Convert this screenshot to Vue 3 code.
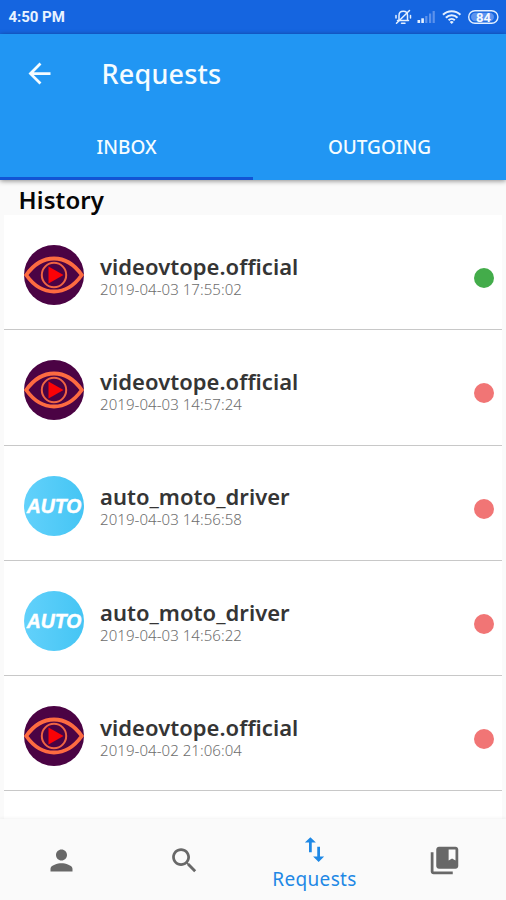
<script setup>
const rows = [
  { name: 'videovtope.official', time: '2019-04-03 17:55:02', kind: 'eye', ok: true },
  { name: 'videovtope.official', time: '2019-04-03 14:57:24', kind: 'eye', ok: false },
  { name: 'auto_moto_driver', time: '2019-04-03 14:56:58', kind: 'auto', ok: false },
  { name: 'auto_moto_driver', time: '2019-04-03 14:56:22', kind: 'auto', ok: false },
  { name: 'videovtope.official', time: '2019-04-02 21:06:04', kind: 'eye', ok: false },
]
</script>

<template>
  <div class="screen">
    <div class="status">
      <span class="clock">4:50 PM</span>
      <svg class="status-icons" width="108" height="20" viewBox="-2 0 108 20" fill="none">
        <g stroke="#e4f0ff" stroke-width="1.5" stroke-linecap="round" stroke-linejoin="round">
          <path d="M1.500 13.500h11M3 13V8.500C3 6 4.800 4.300 7.300 4.300S11.500 6 11.500 8.500V13" />
          <path d="M5.500 16.300h3.500M0.500 16.300L13.500 3.500M0 8.500v2.500M14.500 8.500v2.500" />
        </g>
        <g>
          <rect x="21.500" y="13" width="2.600" height="3" fill="#e4f0ff" />
          <rect x="25.300" y="11.300" width="2.600" height="4.700" fill="#e4f0ff" />
          <rect x="29.200" y="9" width="2.200" height="7" fill="#5c92ec" />
          <rect x="33" y="6.500" width="2.200" height="9.500" fill="#5c92ec" />
          <rect x="36.600" y="4" width="2.200" height="12" fill="#5c92ec" />
        </g>
        <g stroke="#e4f0ff" stroke-width="2.100">
          <path d="M47 7.800a12.300 12.300 0 0 1 17.400 0" />
          <path d="M49.900 10.700a8.200 8.200 0 0 1 11.600 0" />
          <path d="M52.600 13.300a4.400 4.400 0 0 1 6.200 0" />
        </g>
        <path d="M53.700 14.900L55.700 17l2-2.100a3 3 0 0 0-4 0z" fill="#e4f0ff" />
        <rect x="72.700" y="3.700" width="29.200" height="12.600" rx="6.300" stroke="#e4f0ff" stroke-width="1.400" />
        <rect x="75" y="5.800" width="23" height="8.400" rx="4.200" fill="#5c93ef" />
        <text class="battery" x="87.500" y="14.500" text-anchor="middle">84</text>
      </svg>
    </div>

    <header class="appbar">
      <div class="title-row">
        <svg class="icon back" viewBox="0 0 24 24"><path d="M20 11H7.830l5.590-5.590L12 4l-8 8 8 8 1.410-1.410L7.830 13H20v-2z" /></svg>
        <h1>Requests</h1>
      </div>
      <nav class="tabs">
        <div class="tab active">INBOX</div>
        <div class="tab">OUTGOING</div>
      </nav>
    </header>

    <main>
      <h2>History</h2>
      <ul class="list">
        <li v-for="(r, i) in rows" :key="i" class="row">
          <svg v-if="r.kind === 'eye'" class="avatar" viewBox="0 0 60 60">
            <circle cx="30" cy="30" r="30" fill="#4b0344" />
            <path d="M2.200 30C10 19 19 13.500 30 13.500S50 19 57.800 30C50 41 41 46.500 30 46.500S10 41 2.200 30z" fill="none" stroke="#fd6b41" stroke-width="3.800" />
            <circle cx="30" cy="30" r="12.200" fill="none" stroke="#f06543" stroke-width="2" />
            <path d="M24.500 21.500L39.500 30l-15 8.500z" fill="#fb0207" />
          </svg>
          <svg v-else class="avatar" viewBox="0 0 60 60">
            <defs>
              <linearGradient :id="'sky' + i" x1="0" y1="0" x2="1" y2="0">
                <stop offset="0" stop-color="#62d1fb" />
                <stop offset="1" stop-color="#45c5f4" />
              </linearGradient>
            </defs>
            <circle cx="30" cy="30" r="30" :fill="`url(#sky${i})`" />
            <text class="auto-logo" x="2.800" y="36.800" textLength="54.500" lengthAdjust="spacingAndGlyphs">AUTO</text>
          </svg>
          <div class="info">
            <div class="name">{{ r.name }}</div>
            <div class="time">{{ r.time }}</div>
          </div>
          <span class="dot" :class="{ ok: r.ok }"></span>
        </li>
      </ul>
    </main>

    <footer class="bottom">
      <div class="item person"><svg class="icon" viewBox="0 0 24 24"><path d="M12 12c2.210 0 4-1.790 4-4s-1.790-4-4-4-4 1.790-4 4 1.790 4 4 4zm0 2c-2.670 0-8 1.340-8 4v2h16v-2c0-2.660-5.330-4-8-4z" /></svg></div>
      <div class="item search"><svg class="icon" viewBox="0 0 24 24"><path d="M15.500 14h-.790l-.280-.270C15.410 12.590 16 11.110 16 9.500 16 5.910 13.090 3 9.500 3S3 5.910 3 9.500 5.910 16 9.500 16c1.610 0 3.090-.590 4.230-1.570l.270.280v.790l5 4.990L20.490 19l-4.990-5zm-6 0C7.010 14 5 11.990 5 9.500S7.010 5 9.500 5 14 7.010 14 9.500 11.990 14 9.500 14z" /></svg></div>
      <div class="item current">
        <svg class="icon" viewBox="0 0 24 24"><path d="M16 17.010V10h-2v7.010h-3L15 21l4-3.990h-3zM9 3L5 6.990h3V14h2V6.990h3L9 3z" /></svg>
        <span class="label">Requests</span>
      </div>
      <div class="item saved"><svg class="icon" viewBox="0 0 24 24"><path d="M4 6H2v14c0 1.100.900 2 2 2h14v-2H4V6z" /><path d="M20 2H8c-1.100 0-2 .900-2 2v12c0 1.100.900 2 2 2h12c1.100 0 2-.900 2-2V4c0-1.100-.900-2-2-2zm0 10l-2.500-1.500L15 12V4h5v8z" /></svg></div>
    </footer>
  </div>
</template>

<style>
body { background: #fafafa; }
</style>

<style scoped>
.screen { width: 506px; height: 900px; display: flex; flex-direction: column; overflow: hidden; background: #fafafa; font-family: "Noto Sans", "Open Sans", sans-serif; }
.status { height: 34px; flex: none; box-sizing: border-box; padding: 0 4px 0 8.500px; display: flex; align-items: center; justify-content: space-between; background: #1565e0; }
.clock { font: 700 15px/34px Roboto, sans-serif; color: #e8f3ff; letter-spacing: -0.050px; }
.status-icons { margin-bottom: 1px; }
.battery { font: 700 13px Roboto, sans-serif; fill: #f4f9ff; }
.icon { width: 33px; height: 33px; fill: currentColor; display: block; flex: none; }
.appbar { height: 146px; flex: none; display: flex; flex-direction: column; background: #2196f3; color: #f5fcff; box-shadow: 0 1px 5px rgba(0, 0, 0, 0.45); position: relative; z-index: 1; }
.title-row { height: 79px; display: flex; align-items: center; padding-left: 23px; }
h1 { margin: 0 0 0 45.500px; font-size: 27px; line-height: 40px; font-weight: 500; letter-spacing: 0.2px; }
.tabs { flex: 1; display: flex; }
.tab { flex: 1; box-sizing: border-box; padding-top: 4px; border-bottom: 3px solid transparent; display: flex; align-items: center; justify-content: center; font-size: 19px; font-weight: 500; }
.tab.active { border-color: #1254d4; }
main { flex: 1; min-height: 0; display: flex; flex-direction: column; }
h2 { margin: 0; height: 35px; flex: none; padding: 3px 0 0 18.500px; box-sizing: border-box; font-size: 24px; line-height: 34px; font-weight: 600; letter-spacing: 0.1px; color: #060606; }
.list { margin: 0 4px; padding: 0; list-style: none; flex: 1; background: #fff; }
.row { height: 115.300px; box-sizing: border-box; border-bottom: 1.500px solid #c8c8c8; padding: 0 8px 0 20px; display: flex; align-items: center; }
.avatar { width: 60px; height: 60px; flex: none; margin-top: 6px; }
.auto-logo { font: italic 700 20px "Liberation Sans", sans-serif; fill: #fff; stroke: #fff; stroke-width: 0.5px; }
.info { flex: 1; margin-left: 16px; padding-top: 8px; white-space: nowrap; }
.name { font-size: 22px; line-height: 25px; font-weight: 600; letter-spacing: 0.030px; color: #353535; }
.time { font-size: 15px; line-height: 20px; font-weight: 300; letter-spacing: 0.060px; color: #6d6d6d; }
.dot { width: 20px; height: 20px; border-radius: 50%; background: #f17575; margin-top: 12px; }
.dot.ok { background: #43ac4a; }
.bottom { height: 81px; flex: none; display: flex; background: #fafafa; color: #686868; box-shadow: 0 -1px 3px rgba(0, 0, 0, 0.05); }
.item { display: flex; flex-direction: column; align-items: center; padding-top: 25px; box-sizing: border-box; }
.person { width: 123px; }
.search { width: 123px; }
.current { width: 137px; padding-top: 14px; color: #1e88e5; }
.saved { width: 122px; }
.label { font-size: 19px; line-height: 26px; letter-spacing: 0.350px; }
</style>
